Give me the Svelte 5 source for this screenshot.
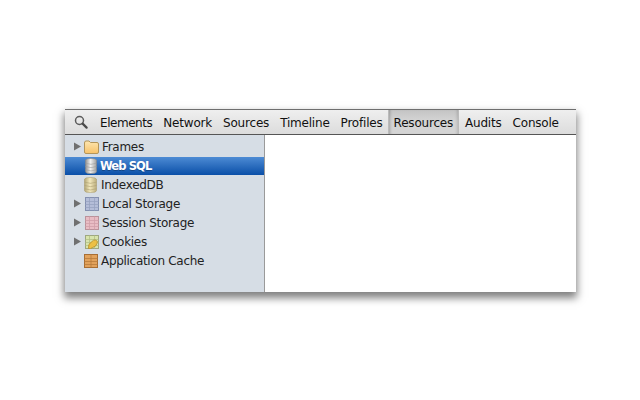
<script>
  const tabs = [
    { name: 'Elements', first: true }, { name: 'Network' }, { name: 'Sources' }, { name: 'Timeline' },
    { name: 'Profiles' }, { name: 'Resources', active: true }, { name: 'Audits' }, { name: 'Console' }
  ];
  const rows = [
    { name: 'Frames', icon: 'folder', arrow: true },
    { name: 'Web SQL', icon: 'db', selected: true },
    { name: 'IndexedDB', icon: 'db', tight: true },
    { name: 'Local Storage', icon: 'blue', arrow: true },
    { name: 'Session Storage', icon: 'pink', arrow: true },
    { name: 'Cookies', icon: 'cookie', arrow: true },
    { name: 'Application Cache', icon: 'orange', tight: true }
  ];
  const gridColors = {
    blue: ['#b4bdd8', '#8490b0', '#98a3c2'],
    pink: ['#e8bcc4', '#ba929b', '#d09fa9'],
    orange: ['#e2a25c', '#a86e34', '#b97c3c'],
    cookie: ['#d8e4ac', '#9ea880', '#b4c088']
  };
</script>

<div class="page">
  <div class="window">
    <div class="toolbar">
      <svg class="search" width="14" height="14" viewBox="0 0 14 14">
        <circle cx="5.5" cy="5.5" r="4" fill="none" stroke="#5c5c5c" stroke-width="1.5" />
        <path d="M8.6 8.6 L12.6 12.6" stroke="#4a4a4a" stroke-width="2.2" stroke-linecap="round" />
      </svg>
      <div class="tabs">
        {#each tabs as t}
          <span class="tab" class:active={t.active} class:first={t.first}>{t.name}</span>
        {/each}
      </div>
    </div>
    <div class="body">
      <div class="sidebar">
        {#each rows as r}
          <div class="row" class:selected={r.selected} class:tight={r.tight}>
            <span class="arrow">{#if r.arrow}<svg width="7" height="9" viewBox="0 0 7 9"><path d="M0 0.5 L7 4.5 L0 8.5 Z" fill="#707070" /></svg>{/if}</span>
            <span class="icon">
              {#if r.icon === 'folder'}
                <svg width="15" height="14" viewBox="0 0 15 14">
                  <defs><linearGradient id="fo" x1="0" y1="0" x2="0" y2="1"><stop offset="0" stop-color="#fde6b0" /><stop offset="1" stop-color="#f7c26a" /></linearGradient></defs>
                  <path d="M0.5 3 Q0.5 1 2 1 H5 L6.5 2.5 H13 Q14.5 2.5 14.5 4 V12 Q14.5 13.5 13 13.5 H2 Q0.5 13.5 0.5 12 Z" fill="url(#fo)" stroke="#b3955a" />
                </svg>
              {:else if r.icon === 'db'}
                <svg class="dbicon" class:sel={r.selected} width={r.selected ? 12 : 13} height="16" viewBox="0 0 13 17" preserveAspectRatio="none">
                  <defs>
                    <linearGradient id={'d' + r.name.length} x1="0" y1="0" x2="1" y2="0">
                      {#if r.selected}
                        <stop offset="0" stop-color="#8f8f8f" /><stop offset="0.45" stop-color="#f2f2f2" /><stop offset="1" stop-color="#a0a0a0" />
                      {:else}
                        <stop offset="0" stop-color="#b3a777" /><stop offset="0.45" stop-color="#f4e9bd" /><stop offset="1" stop-color="#baad7d" />
                      {/if}
                    </linearGradient>
                  </defs>
                  <path d="M0.5 2.5 Q0.5 0.5 6.5 0.5 Q12.5 0.5 12.5 2.5 V14.5 Q12.5 16.5 6.5 16.5 Q0.5 16.5 0.5 14.5 Z" fill={'url(#d' + r.name.length + ')'} stroke={r.selected ? '#8a8a8a' : '#ad9f72'} stroke-width="0.6" />
                  <path d="M0.5 5.5 Q6.5 8 12.5 5.5 M0.5 9 Q6.5 11.5 12.5 9 M0.5 12.5 Q6.5 15 12.5 12.5" fill="none" stroke={r.selected ? '#9a9a9a' : '#ad9f72'} stroke-width="0.6" />
                </svg>
              {:else}
                <svg class="grid" class:offset={r.icon !== 'orange'} width="14" height="14" viewBox="0 0 14 14">
                  <rect x="0.5" y="0.5" width="13" height="13" fill={gridColors[r.icon][0]} stroke={gridColors[r.icon][1]} />
                  {#if r.icon === 'orange'}
                    <path d="M0.5 4.5 H13.5 M0.5 7.5 H13.5 M0.5 10.5 H13.5 M7 0.5 V13.5" stroke={gridColors[r.icon][2]} stroke-width="0.8" fill="none" />
                  {:else}
                    <path d="M0.5 4.5 H13.5 M0.5 7.5 H13.5 M0.5 10.5 H13.5 M4.5 0.5 V13.5 M9.5 0.5 V13.5" stroke={gridColors[r.icon][2]} stroke-width="0.8" fill="none" />
                  {/if}
                  {#if r.icon === 'cookie'}
                    <path d="M3.5 13.5 Q2.5 9 7 6.5 Q8.5 4.5 10.5 5 Q13.5 6 12 8.5 Q11 12 7.5 12.5 Q5.5 14.5 3.5 13.5 Z" fill="#ecc044" stroke="#ab8528" stroke-width="0.7" />
                  {/if}
                </svg>
              {/if}
            </span>
            <span class="label">{r.name}</span>
          </div>
        {/each}
      </div>
      <div class="content"></div>
    </div>
  </div>
</div>

<style>
  :global(body) { margin: 0; background: #fff; }
  .page { width: 640px; height: 400px; padding: 109px 64px 0 65px; box-sizing: border-box; }
  .window {
    height: 183px;
    display: flex;
    flex-direction: column;
    background: #fff;
    box-shadow: 0 5px 8px 1px rgba(0, 0, 0, 0.5);
    font-family: "DejaVu Sans", sans-serif;
    font-size: 12px;
    color: #222;
  }
  .toolbar {
    height: 24px;
    flex: none;
    display: flex;
    align-items: center;
    border-top: 1px solid #6e6e6e;
    border-bottom: 1px solid #555;
    background: linear-gradient(#efefef, #dcdcdc);
    padding-left: 9px;
  }
  .search { flex: none; }
  .tabs { display: flex; align-items: stretch; align-self: stretch; margin-left: 6.5px; }
  .tab {
    display: flex;
    align-items: center;
    padding: 1px 5.5px 0;
    color: #111;
    letter-spacing: -0.2px;
  }
  .tab.first { letter-spacing: -0.45px; }
  .tab.active {
    background: linear-gradient(#c4c4c4, #d4d4d4 45%);
    border-left: 1px solid #bbb;
    border-right: 1px solid #bbb;
    box-shadow: inset 3px 0 3px -2px rgba(0, 0, 0, 0.25), inset -3px 0 3px -2px rgba(0, 0, 0, 0.15);
    padding: 1px 4.5px 0;
    margin-right: 1px;
  }
  .body { flex: 1; display: flex; min-height: 0; }
  .sidebar {
    width: 199px;
    flex: none;
    background: #d6dde5;
    border-right: 1px solid #9a9a9a;
    padding-top: 2px;
  }
  .row {
    height: 19px;
    box-sizing: border-box;
    display: flex;
    align-items: center;
    padding-left: 9px;
    color: #222;
    letter-spacing: -0.3px;
  }
  .row.selected {
    margin-top: 1px;
    height: 18px;
    padding-bottom: 1px;
    background: linear-gradient(#4d8bd4, #0a4fa8);
    color: #fff;
    font-weight: 700;
    font-size: 11.5px;
    letter-spacing: -0.9px;
    text-shadow: 0 1px 0 rgba(0, 0, 0, 0.25);
  }
  .arrow { width: 10px; display: flex; align-items: center; flex: none; }
  .icon { width: 17px; display: flex; align-items: center; flex: none; }
  .grid.offset { margin-left: 1px; }
  .dbicon.sel { margin-left: 1px; }
  .label { white-space: nowrap; margin-left: 1px; }
  .tight .label { margin-left: 0; }
  .selected .label { margin-left: -1px; }
  .content { flex: 1; background: #fff; }
</style>
